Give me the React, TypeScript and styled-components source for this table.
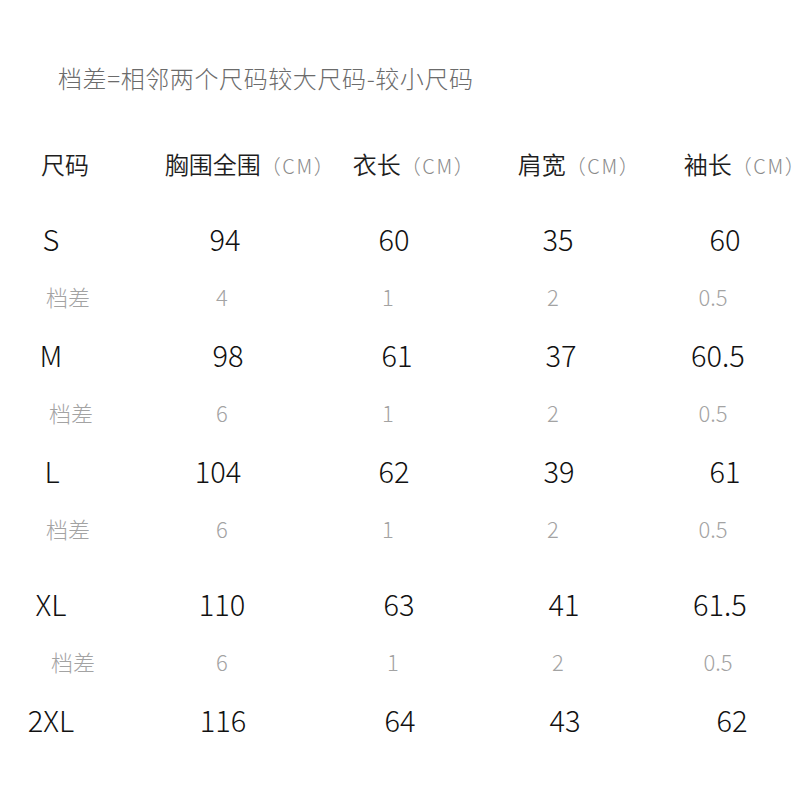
import React from 'react';
import styled, { createGlobalStyle } from 'styled-components';

const GlobalStyle = createGlobalStyle`
  body {
    margin: 0;
    background: #ffffff;
    font-family: "Noto Sans CJK SC", "Noto Sans", sans-serif;
  }
`;

type Cell = [string, number];

const headers: Cell[] = [
  ['尺码', 14],
  ['胸围全围', 25],
  ['衣长', 19],
  ['肩宽', 19],
  ['袖长', 20]
];

const rows: { size: Cell[]; diff: Cell[]; gap?: boolean }[] = [
  {
    size: [['S', 0], ['94', 0], ['60', -1], ['35', -2], ['60', 0]],
    diff: [['档差', 17], ['4', -3], ['1', -7], ['2', -7], ['0.5', -12]],
    gap: true
  },
  {
    size: [['M', 0], ['98', 3], ['61', 2], ['37', 1], ['60.5', -7]],
    diff: [['档差', 20], ['6', -3], ['1', -7], ['2', -7], ['0.5', -12]]
  },
  {
    size: [['L', 1], ['104', -7], ['62', -1], ['39', -1], ['61', 0]],
    diff: [['档差', 17], ['6', -3], ['1', -7], ['2', -7], ['0.5', -12]]
  },
  {
    size: [['XL', 0], ['110', -3], ['63', 4], ['41', 4], ['61.5', -5]],
    diff: [['档差', 22], ['6', -3], ['1', -2], ['2', -2], ['0.5', -7]],
    gap: true
  },
  {
    size: [['2XL', 0], ['116', -2], ['64', 5], ['43', 5], ['62', 7]],
    diff: []
  }
];

const App = () => {
  return (
    <Page>
      <GlobalStyle />
      <Title>档差=相邻两个尺码较大尺码-较小尺码</Title>
      <Table>
        <Row>
          {headers.map(([label, dx], i) => (
            <HeadCell key={label} $dx={dx}>
              {label}
              {i > 0 && <Unit>（CM）</Unit>}
            </HeadCell>
          ))}
        </Row>
        {rows.map((row, r) => (
          <React.Fragment key={r}>
            <Row $gap={row.gap}>
              {row.size.map(([value, dx], i) => (
                <SizeCell key={i} $dx={dx}>
                  {value}
                </SizeCell>
              ))}
            </Row>
            {row.diff.length > 0 && (
              <Row>
                {row.diff.map(([value, dx], i) => (
                  <DiffCell key={i} $dx={dx}>
                    {value}
                  </DiffCell>
                ))}
              </Row>
            )}
          </React.Fragment>
        ))}
      </Table>
    </Page>
  );
};

export default App;

const Page = styled.div`
  width: 800px;
  height: 800px;
  overflow: hidden;
  background: #ffffff;
  padding-top: 62px;
  box-sizing: border-box;
`;

const Title = styled.div`
  padding-left: 58px;
  height: 32px;
  line-height: 32px;
  font-size: 24px;
  font-weight: 300;
  letter-spacing: 0.6px;
  color: #6b6b6b;
  white-space: nowrap;
`;

const Table = styled.div`
  margin-top: 40px;
  display: flex;
  flex-direction: column;
`;

const Row = styled.div<{ $gap?: boolean }>`
  display: grid;
  grid-template-columns: 102px 246px 94px 236px 94px;
  height: 58px;
  align-items: center;
  margin-top: ${(p) => (p.$gap ? '17px' : '0')};
`;

const BaseCell = styled.div<{ $dx: number }>`
  display: flex;
  justify-content: center;
  white-space: nowrap;
  min-width: 0;
  transform: translateX(${(p) => p.$dx}px);
`;

const HeadCell = styled(BaseCell)`
  font-size: 24px;
  font-weight: 350;
  color: #1e1e1e;
  align-items: baseline;
`;

const Unit = styled.span`
  font-size: 20px;
  font-weight: 300;
  color: #8a8a8a;
  letter-spacing: 1.5px;
`;

const SizeCell = styled(BaseCell)`
  font-size: 29px;
  font-weight: 300;
  color: #111111;
`;

const DiffCell = styled(BaseCell)`
  font-size: 22px;
  font-weight: 300;
  color: #a3a3a3;
`;
